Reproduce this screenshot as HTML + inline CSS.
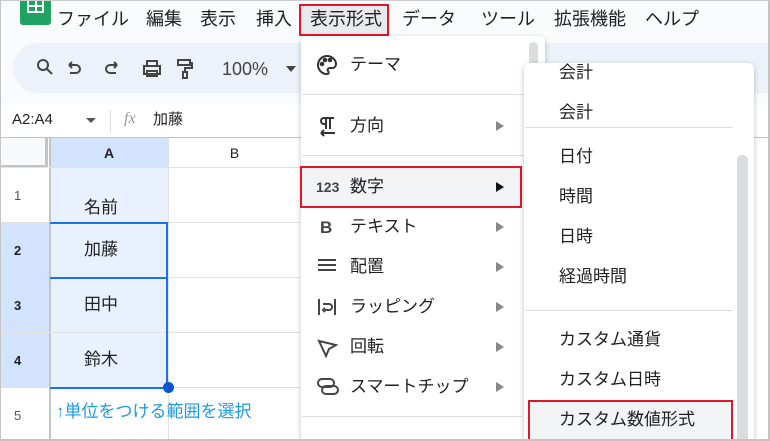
<!DOCTYPE html>
<html><head><meta charset="utf-8"><style>
*{box-sizing:border-box;margin:0;padding:0}
html,body{width:770px;height:441px;overflow:hidden}
body{position:relative;background:#fff;font-family:"Liberation Sans","Noto Sans CJK JP",sans-serif;color:#202124}
.a{position:absolute}
.frame{position:absolute;left:0;top:0;width:770px;height:441px;border:2px solid #c4c4c4;border-left:1px solid #c4c4c4;border-top:1px solid #ccc;pointer-events:none;z-index:50}
.menu{font-size:18px;top:10px;line-height:1}
.mi{position:absolute;font-size:17px;white-space:nowrap;line-height:1}
.arr{position:absolute;left:496px;width:0;height:0;border-left:8px solid #888;border-top:5px solid transparent;border-bottom:5px solid transparent}
.sep{position:absolute;height:1px;background:#dadce0}
.hl{position:absolute;border-bottom:1px solid #e1e1e1}
.vl{position:absolute;width:1px;background:#e1e1e1}
.ct{position:absolute;font-size:17px;line-height:1;white-space:nowrap}
</style></head><body>
<div class="a" style="left:0;top:0;width:770px;height:103px;background:#f9fbfd"></div>
<div class="a" style="left:20px;top:-4px;width:31px;height:29px;background:#1ea362;border-radius:3px"></div>
<div class="a" style="left:27px;top:0;width:17px;height:13px;border:2px solid #fff;border-top:none"></div>
<div class="a" style="left:35px;top:0;width:2px;height:13px;background:#fff"></div>
<div class="a" style="left:27px;top:5px;width:17px;height:2px;background:#fff"></div>
<div class="a menu" style="left:57px">ファイル</div>
<div class="a menu" style="left:146px">編集</div>
<div class="a menu" style="left:200px">表示</div>
<div class="a menu" style="left:256px">挿入</div>
<div class="a" style="left:299px;top:4px;width:90px;height:32px;background:#e8eaed;border:2px solid #e0162b"></div>
<div class="a menu" style="left:310px">表示形式</div>
<div class="a menu" style="left:402px">データ</div>
<div class="a menu" style="left:481px">ツール</div>
<div class="a menu" style="left:554px">拡張機能</div>
<div class="a menu" style="left:645px">ヘルプ</div>
<div class="a" style="left:13px;top:43px;width:800px;height:50px;background:#edf2fa;border-radius:25px"></div>
<svg class="a" style="left:36px;top:57px" width="150" height="24" viewBox="0 0 150 24" fill="none" stroke="#444" stroke-width="2">
<circle cx="7" cy="8" r="5"/><path d="M11 12l5 5"/>
<path d="M33 8h7a4 4 0 010 8h-6M33 8l3-3M33 8l3 3"/>
<path d="M81 8h-7a4 4 0 000 8h6M81 8l-3-3M81 8l-3 3"/>
<rect x="108" y="9" width="16" height="8"/><rect x="111" y="4" width="10" height="5"/><rect x="111" y="14" width="10" height="5"/>
</svg>
<svg class="a" style="left:175px;top:57px" width="20" height="24" fill="none" stroke="#444" stroke-width="2"><rect x="3" y="3" width="12" height="5"/><path d="M15 6h2v5h-7v4"/><rect x="8" y="15" width="4" height="6"/></svg>
<div class="a" style="left:222px;top:60px;font-size:18px;line-height:1;color:#444">100%</div>
<div class="a" style="left:286px;top:66px;border-top:6px solid #444;border-left:5px solid transparent;border-right:5px solid transparent"></div>
<div class="a" style="left:12px;top:112px;font-size:15px;line-height:1">A2:A4</div>
<div class="a" style="left:86px;top:118px;border-top:5px solid #555;border-left:5px solid transparent;border-right:5px solid transparent"></div>
<div class="a" style="left:110px;top:110px;width:1px;height:22px;background:#ddd"></div>
<div class="a" style="left:124px;top:111px;font-size:16px;line-height:1;font-style:italic;color:#999;font-family:'Liberation Serif',serif">fx</div>
<div class="a" style="left:153px;top:112px;font-size:15px;line-height:1">加藤</div>
<div class="a" style="left:0;top:137px;width:770px;height:1px;background:#c4c4c4"></div>
<div class="a" style="left:0;top:138px;width:48px;height:30px;background:#f8f9fa;border-right:3px solid #c4c4c4;border-bottom:3px solid #c4c4c4"></div>
<div class="a" style="left:50px;top:138px;width:118px;height:30px;background:#d3e3fd;text-align:center;font-size:14px;line-height:30px;font-weight:bold">A</div>
<div class="a" style="left:168px;top:138px;width:132px;height:30px;text-align:center;font-size:14px;line-height:30px;border-left:1px solid #e1e1e1">B</div>
<div class="a" style="left:50px;top:168px;width:118px;height:220px;background:#e8f1fd"></div>
<div class="a" style="left:0;top:223px;width:50px;height:165px;background:#d3e3fd"></div>
<div class="a" style="left:49px;top:138px;width:2px;height:303px;background:#c4c4c4"></div>
<div class="hl" style="left:0;top:167px;width:300px"></div>
<div class="hl" style="left:0;top:222px;width:300px"></div>
<div class="hl" style="left:0;top:277px;width:300px"></div>
<div class="hl" style="left:0;top:332px;width:300px"></div>
<div class="hl" style="left:0;top:387px;width:300px"></div>
<div class="vl" style="left:168px;top:138px;height:303px"></div>
<div class="a" style="left:50px;top:222px;width:118px;height:2px;background:#1a73e8"></div>
<div class="a" style="left:50px;top:277px;width:118px;height:2px;background:#1a73e8"></div>
<div class="a" style="left:166px;top:222px;width:2px;height:166px;background:#1a73e8"></div>
<div class="a" style="left:50px;top:387px;width:118px;height:2px;background:#1a73e8"></div>
<div class="a" style="left:163px;top:382px;width:11px;height:11px;border-radius:50%;background:#0b57d0"></div>
<div class="a" style="left:14px;top:189px;font-size:13px;line-height:1;color:#555">1</div>
<div class="a" style="left:14px;top:244px;font-size:13px;line-height:1;font-weight:bold">2</div>
<div class="a" style="left:14px;top:299px;font-size:13px;line-height:1;font-weight:bold">3</div>
<div class="a" style="left:14px;top:354px;font-size:13px;line-height:1;font-weight:bold">4</div>
<div class="a" style="left:14px;top:409px;font-size:13px;line-height:1;color:#555">5</div>
<div class="ct" style="left:84px;top:199px">名前</div>
<div class="ct" style="left:84px;top:241px">加藤</div>
<div class="ct" style="left:84px;top:296px">田中</div>
<div class="ct" style="left:84px;top:351px">鈴木</div>
<div class="ct" style="left:56px;top:403px;color:#1a9be6">↑単位をつける範囲を選択</div>
<div class="a" style="left:301px;top:36px;width:244px;height:410px;background:#fff;border-radius:6px;box-shadow:0 2px 6px rgba(0,0,0,.25)"></div>
<div class="a" style="left:529px;top:42px;width:9px;height:28px;background:#dadce0;border-radius:5px"></div>
<svg class="a" style="left:316px;top:54px" width="22" height="22" fill="none" stroke="#333" stroke-width="2"><path d="M11 2a9 9 0 000 18c2 0 2-2 1-3s0-3 2-3h3a4 4 0 003-4c0-4-4-8-9-8z"/><circle cx="6" cy="10" r="1.3" fill="#333"/><circle cx="9" cy="6" r="1.3" fill="#333"/><circle cx="14" cy="6" r="1.3" fill="#333"/></svg>
<div class="mi" style="left:350px;top:56px">テーマ</div>
<div class="sep" style="left:302px;top:94px;width:242px"></div>
<svg class="a" style="left:316px;top:115px" width="22" height="22" fill="none" stroke="#333" stroke-width="2"><path d="M8 3h10M10 3v11M14 3v11M8 3a3 3 0 000 6h2"/><path d="M5 18h14M5 18l3-3M5 18l3 3"/></svg>
<div class="mi" style="left:350px;top:117px">方向</div><div class="arr" style="top:121px"></div>
<div class="sep" style="left:302px;top:155px;width:242px"></div>
<div class="a" style="left:300px;top:166px;width:222px;height:42px;background:#f1f3f4;border:2px solid #e0162b"></div>
<div class="a" style="left:316px;top:180px;font-size:14px;line-height:1;font-weight:bold;color:#444">123</div>
<div class="mi" style="left:350px;top:178px">数字</div><div class="arr" style="top:182px;border-left-color:#111"></div>
<div class="a" style="left:320px;top:219px;font-size:17px;line-height:1;font-weight:bold;color:#444">B</div>
<div class="mi" style="left:350px;top:218px">テキスト</div><div class="arr" style="top:222px"></div>
<div class="a" style="left:318px;top:259px;width:18px;height:2px;background:#444;box-shadow:0 5px 0 #444,0 10px 0 #444"></div>
<div class="a" style="left:318px;top:269px;width:12px;height:2px;background:#444"></div>
<div class="mi" style="left:350px;top:258px">配置</div><div class="arr" style="top:262px"></div>
<svg class="a" style="left:316px;top:296px" width="22" height="22" fill="none" stroke="#444" stroke-width="2"><path d="M3 3v16M19 3v16M7 8h6a3 3 0 010 6h-4M9 12l-2 2 2 2"/></svg>
<div class="mi" style="left:350px;top:298px">ラッピング</div><div class="arr" style="top:302px"></div>
<svg class="a" style="left:316px;top:336px" width="22" height="22" fill="none" stroke="#444" stroke-width="2"><path d="M3 5l7 15 3-7 7-4z"/></svg>
<div class="mi" style="left:350px;top:338px">回転</div><div class="arr" style="top:342px"></div>
<svg class="a" style="left:316px;top:376px" width="24" height="22" fill="none" stroke="#444" stroke-width="2"><rect x="2" y="3" width="16" height="8" rx="4"/><rect x="6" y="10" width="16" height="8" rx="4"/></svg>
<div class="mi" style="left:350px;top:378px">スマートチップ</div><div class="arr" style="top:382px"></div>
<div class="sep" style="left:302px;top:416px;width:220px"></div>
<div class="a" style="left:524px;top:63px;width:230px;height:390px;background:#fff;border-radius:6px;box-shadow:0 2px 6px rgba(0,0,0,.25)"></div>
<div class="a" style="left:737px;top:155px;width:11px;height:300px;background:#dadce0;border-radius:5px"></div>
<div class="mi" style="left:559px;top:64px">会計</div>
<div class="mi" style="left:559px;top:104px">会計</div>
<div class="sep" style="left:525px;top:127px;width:208px"></div>
<div class="mi" style="left:559px;top:148px">日付</div>
<div class="mi" style="left:559px;top:188px">時間</div>
<div class="mi" style="left:559px;top:228px">日時</div>
<div class="mi" style="left:559px;top:268px">経過時間</div>
<div class="sep" style="left:525px;top:310px;width:208px"></div>
<div class="mi" style="left:559px;top:331px">カスタム通貨</div>
<div class="mi" style="left:559px;top:371px">カスタム日時</div>
<div class="a" style="left:528px;top:400px;width:205px;height:42px;background:#f1f3f4;border:2px solid #e0162b"></div>
<div class="mi" style="left:559px;top:411px">カスタム数値形式</div>
<div class="frame"></div>
</body></html>
